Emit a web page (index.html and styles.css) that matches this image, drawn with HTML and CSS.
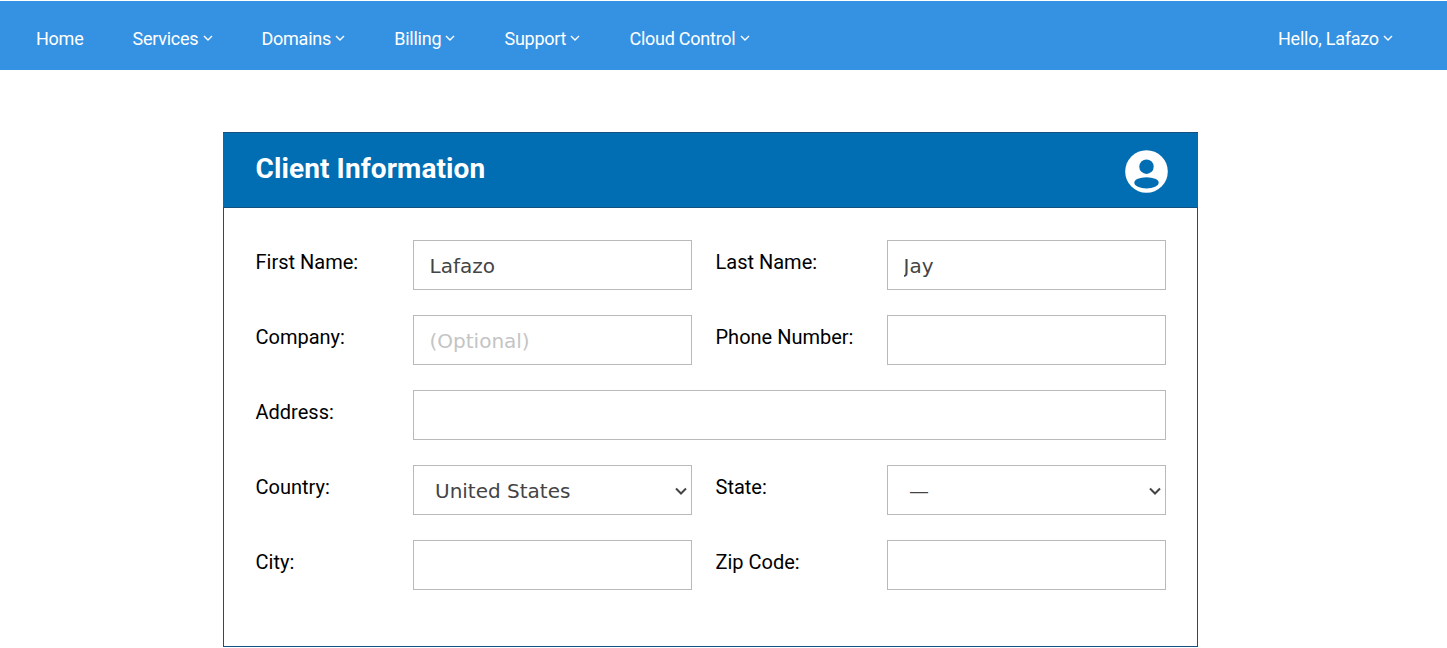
FILE: index.html
```html
<!DOCTYPE html>
<html>
<head>
<meta name="viewport" content="width=device-width, initial-scale=1">
<title>Client Information</title>
<link rel="stylesheet" href="styles.css">
</head>
<body>
<nav class="navbar">
  <ul class="nav-list">
    <li><a href="#">Home</a></li>
    <li><a href="#">Services <svg class="caret" viewBox="0 0 10 6"><path d="M1 1l4 4 4-4"/></svg></a></li>
    <li><a href="#">Domains <svg class="caret" viewBox="0 0 10 6"><path d="M1 1l4 4 4-4"/></svg></a></li>
    <li><a href="#">Billing <svg class="caret" viewBox="0 0 10 6"><path d="M1 1l4 4 4-4"/></svg></a></li>
    <li><a href="#">Support <svg class="caret" viewBox="0 0 10 6"><path d="M1 1l4 4 4-4"/></svg></a></li>
    <li><a href="#">Cloud Control <svg class="caret" viewBox="0 0 10 6"><path d="M1 1l4 4 4-4"/></svg></a></li>
  </ul>
  <a href="#" class="nav-user">Hello, Lafazo <svg class="caret" viewBox="0 0 10 6"><path d="M1 1l4 4 4-4"/></svg></a>
</nav>

<div class="card">
  <div class="card-header">
    <h2>Client Information</h2>
    <svg class="user-icon" viewBox="0 0 43 43">
      <circle class="user-bg" cx="21.5" cy="21.5" r="21.3"/>
      <circle class="user-cut" cx="21.5" cy="16.7" r="7.2"/>
      <ellipse class="user-cut" cx="21.5" cy="32.8" rx="12.2" ry="5.6"/>
    </svg>
  </div>
  <form class="card-body">
    <label>First Name:</label>
    <input type="text" value="Lafazo">
    <label class="second">Last Name:</label>
    <input type="text" value="Jay">

    <label>Company:</label>
    <input type="text" placeholder="(Optional)">
    <label class="second">Phone Number:</label>
    <input type="text">

    <label>Address:</label>
    <input type="text" class="wide">

    <label>Country:</label>
    <select><option>United States</option></select>
    <label class="second">State:</label>
    <select><option>—</option></select>

    <label>City:</label>
    <input type="text">
    <label class="second">Zip Code:</label>
    <input type="text">
  </form>
</div>
</body>
</html>
```

FILE: styles.css
```css
* {
  box-sizing: border-box;
}
html, body {
  overflow: hidden;
}
body {
  margin: 0;
  padding-top: 1px;
  background: #fff;
  font-family: Roboto, sans-serif;
}
/* top navigation */
.navbar {
  display: flex;
  justify-content: space-between;
  align-items: center;
  height: 69px;
  padding: 6px 54px 0 36px;
  background: #3592e2;
}
.nav-list {
  display: flex;
  gap: 49px;
  margin: 0;
  padding: 0;
  list-style: none;
}
.navbar a {
  color: #fff;
  font-size: 18px;
  letter-spacing: -0.25px;
  text-decoration: none;
}
.caret {
  width: 10px;
  height: 6px;
  vertical-align: 4px;
  fill: none;
  stroke: #fff;
  stroke-width: 1.4;
}
/* client form card */
.card {
  width: 975px;
  height: 515px;
  margin: 62px 0 0 223px;
  border: 1px solid #14507f;
}
.card-header {
  display: flex;
  justify-content: space-between;
  align-items: center;
  height: 75px;
  margin: 0 -1px;
  padding: 0 30px 0 32.5px;
  background: #016eb3;
  border-bottom: 1px solid #14507f;
}
.card-header h2 {
  margin: 0 0 3px;
  color: #fff;
  font-size: 28px;
  font-weight: 700;
  letter-spacing: 0.1px;
}
.user-icon {
  width: 43px;
  height: 43px;
  margin-top: 3px;
}
.user-bg {
  fill: #fff;
}
.user-cut {
  fill: #016eb3;
}
.card-body {
  display: grid;
  grid-template-columns: 157.5px 279px 195px 279px;
  row-gap: 25px;
  padding: 32px 0 0 31.5px;
}
label {
  padding-top: 10px;
  color: #000;
  font-size: 20px;
  line-height: 24px;
}
.second {
  padding-left: 23.5px;
}
input, select {
  width: 100%;
  height: 50px;
  border: 1px solid #b9b9b9;
  border-radius: 0;
  background: #fff;
  color: #444;
  font-family: "DejaVu Sans", sans-serif;
  font-size: 20px;
  outline: none;
}
input {
  padding: 2px 16px 0 15.5px;
}
input::placeholder {
  color: #c4c4c4;
}
/* native arrow is too small, draw our own */
select {
  padding: 2px 20px 0 21px;
  appearance: none;
  background: #fff url("data:image/svg+xml,%3Csvg xmlns='http://www.w3.org/2000/svg' width='12' height='8'%3E%3Cpath d='M1 1.5l5 5 5-5' fill='none' stroke='%23444' stroke-width='2'/%3E%3C/svg%3E") no-repeat right 4px top 21px;
}
.wide {
  grid-column: 2 / 5;
}
```
